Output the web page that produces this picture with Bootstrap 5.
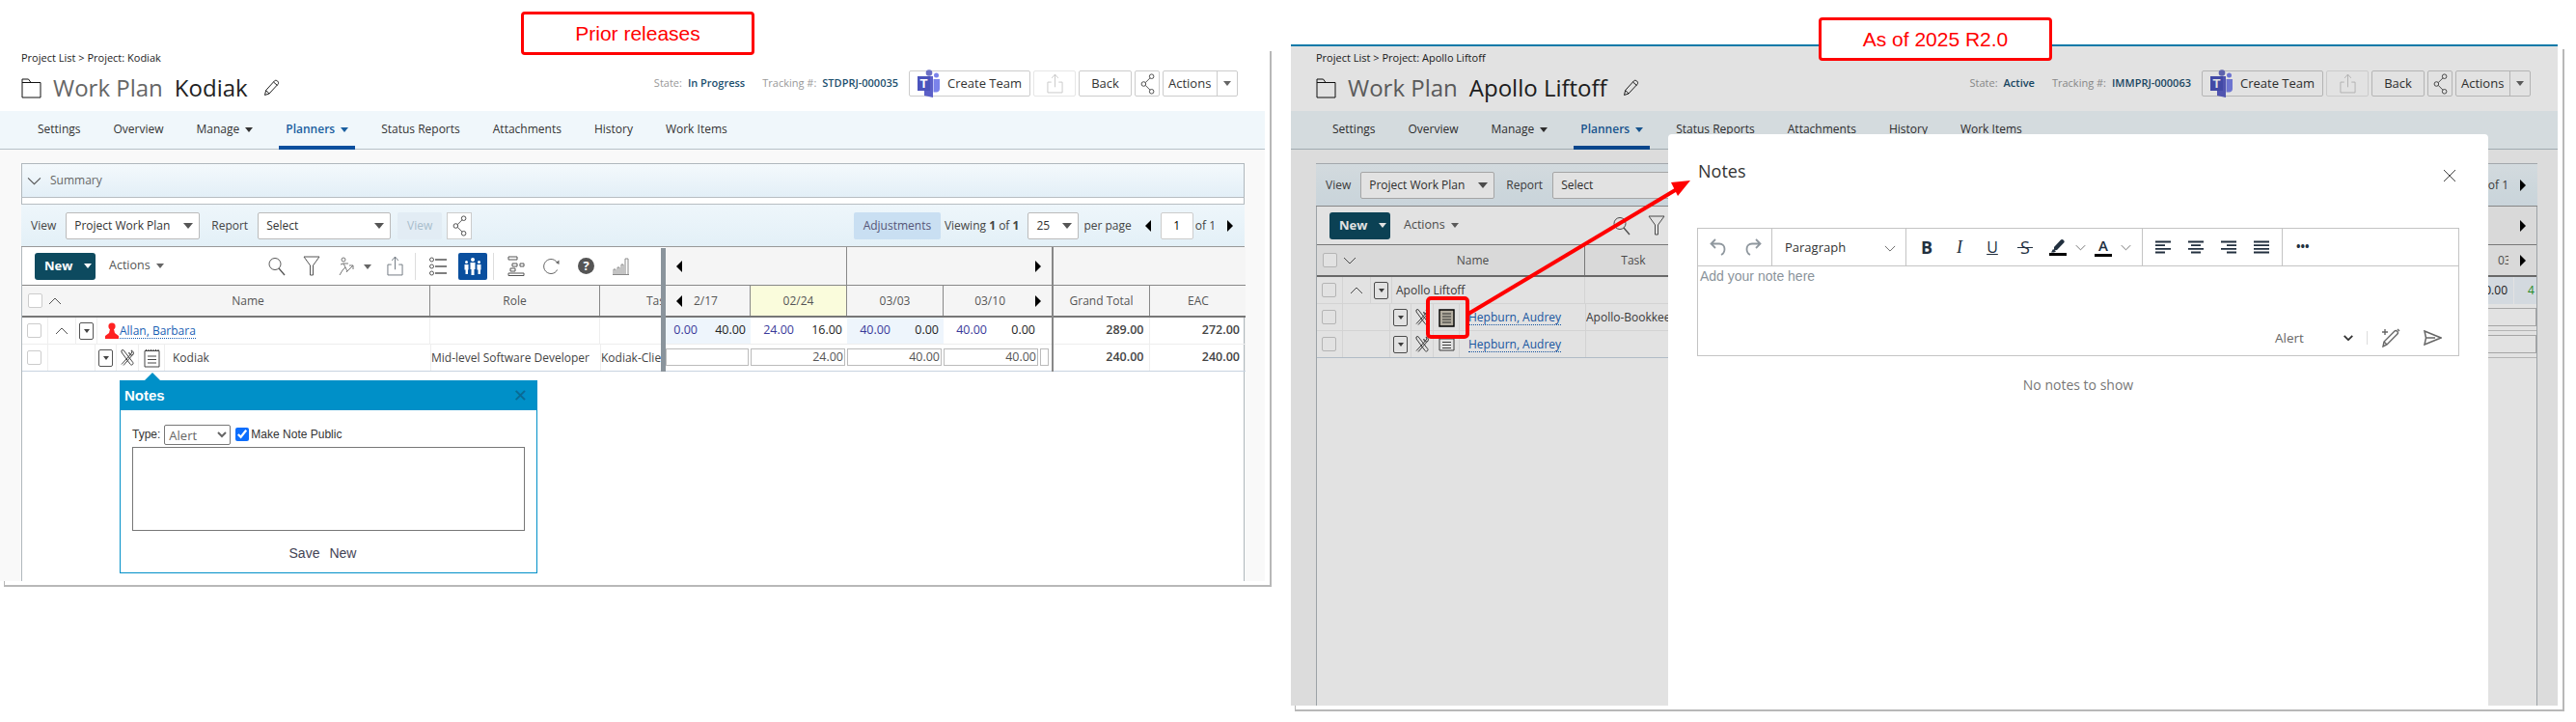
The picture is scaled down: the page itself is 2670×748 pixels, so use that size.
<!DOCTYPE html>
<html lang="en">
<head>
<meta charset="UTF-8">
<title>Notes: prior releases and 2025 R2.0</title>
<link rel="stylesheet" href="https://cdn.jsdelivr.net/npm/bootstrap@5.3.0/dist/css/bootstrap.min.css">
<style>
body { position: relative; width: 2670px; height: 748px; margin: 0; background: #fff; font-family: "Open Sans", sans-serif; font-size: 12px; color: #444; overflow: hidden; }
svg { display: block; flex: none; }
.ico { fill: none; stroke: #555; stroke-width: 1; }

/* the two screenshots */
.pages { display: flex; align-items: flex-start; gap: 20px; }
.shot { position: relative; flex: none; }
.shot::after { content: ""; position: absolute; left: 4px; top: 5px; right: 0; bottom: 0; border: solid #b8b8b8; border-width: 0 2px 2px 1px; z-index: -1; }
.shot-a { --pad: 22px; width: 1318px; height: 560px; margin-top: 48px; padding: 0 7px 6px 0; }
.shot-b { --pad: 26px; width: 1320px; height: 691px; margin-top: 46px; padding: 0 7px 6px 0; }
.shot-in { position: relative; height: 100%; display: flex; flex-direction: column; background: #fff; }
.shot-b .shot-in { border-top: 2px solid #0a7aa8; }
.crumb { height: 24px; line-height: 24px; padding-left: var(--pad); font-size: 11px; color: #222; }
.head-row { display: flex; height: 43px; padding: 0 28px 0 var(--pad); }
.page-title { display: flex; align-items: center; height: 38px; font-size: 24px; line-height: 38px; color: #222; }
.page-title .muted-title { color: #666; margin: 0 12px; }
.head-right { display: flex; align-items: center; height: 27px; margin: 1px 0 0 auto; font-size: 11px; }
.stat-lbl { color: #999; margin-right: 6px; }
.stat-val { color: #1c4f6e; font-weight: 600; margin-right: 18px; }
.stat-val.last { margin-right: 11px; }
.hbtn { display: flex; align-items: center; height: 27px; padding: 0; border: 1px solid #ccc; border-radius: 2px; background: #fff; font-size: 13px; line-height: 1; color: #333; margin-right: 3px; justify-content: center; }
.hbtn-team { width: 126px; gap: 4px; }
.hbtn-up { width: 44px; border-color: #e6e6e6; color: #c8c8c8; }
.hbtn-back { width: 55px; }
.hbtn-share { width: 26px; }
.hbtn-act { width: 78px; margin-right: 0; justify-content: flex-start; padding-left: 5px; }
.act-split { display: flex; align-items: center; justify-content: center; width: 21px; height: 100%; margin-left: auto; border-left: 1px solid #ccc; }

/* tabs */
.tabbar { height: 40px; flex: none; padding-left: var(--pad); background: #f0f7fb; border-bottom: 1px solid #b5c0c8; }
.tabbar .nav-link { position: relative; height: 39px; padding: 0 17px; line-height: 37px; font-size: 12px; color: #333; }
.tabbar .nav-link.active { color: #1a5fa0; font-weight: 600; }
.tabbar .nav-link.active::after { content: ""; position: absolute; left: 10px; right: 10px; bottom: -1px; height: 4px; background: #0a4f9e; }
.tri-d { display: inline-block; width: 0; height: 0; border: solid transparent; border-width: 5px 4px 0; border-top-color: #333; margin-left: 6px; vertical-align: 1px; }
.active .tri-d { border-top-color: #1a5fa0; }
.tri-g { border-top-color: #666; }
.tri-l, .tri-r { display: block; flex: none; width: 0; height: 0; border: solid transparent; border-width: 6px 0; }
.tri-l { border-right: 6px solid #000; }
.tri-r { border-left: 6px solid #000; }

/* page body */
.work { flex: 1; display: flex; flex-direction: column; min-height: 0; padding: 14px 21px 0 var(--pad); background: #f9f9f9; }
.sheet { flex: 1; background: #fff; border: solid #b0b8bd; border-width: 0 1px; }
.sum-bar { display: flex; align-items: center; gap: 9px; height: 36px; padding-left: 5px; margin: 0 -1px; border: 1px solid #b0b8bd; border-bottom-color: #b8bec2; background: linear-gradient(#f4f9fc, #e3eff7); color: #666; }
.sum-gap { height: 6px; }
.opt-bar { display: flex; align-items: center; height: 45px; padding: 0 12px 0 10px; border-top: 1px solid #b8bec2; border-bottom: 1px solid #999; margin: 0 -1px; background: linear-gradient(#eef6fb, #e3f0f7); color: #444; }
.pick.btn { display: flex; align-items: center; justify-content: space-between; height: 28px; padding: 0 6px 0 8px; border: 1px solid #bbb; border-radius: 2px; background: #fff; font-size: 12px; color: #333; }
.pick.btn::after { border-top-color: #555; border-width: 6px 5px 0; margin: 0; }
.pick-view { width: 139px; margin: 0 12px 0 10px; }
.pick-rep { width: 138px; margin: 0 7px 0 10px; }
.pick-size { width: 53px; margin: 0 5px 0 9px; }
.off-btn { display: flex; align-items: center; justify-content: center; width: 46px; height: 28px; background: #e2ecf4; color: #a8bdcc; border-radius: 2px; margin-right: 5px; }
.share-box { display: flex; align-items: center; justify-content: center; width: 26px; height: 28px; background: #fff; border: 1px solid #ccc; }
.adj-btn { display: flex; align-items: center; justify-content: center; width: 90px; height: 28px; margin: 0 4px 0 auto; background: #c9dff2; color: #557; border-radius: 2px; }
.page-box { width: 34px; height: 28px; margin: 0 2px 0 10px; padding: 0; text-align: center; border: 1px solid #ccc; border-radius: 2px; font-size: 12px; }
.pg-l { margin: 0 0 0 14px; }
.pg-r { margin-left: 12px; }

/* grid */
.grid-wrap { display: flex; }
.grid-left { flex: none; width: 662px; overflow: hidden; }
.shot-b .grid-left { width: 370px; }
.split { flex: none; width: 5px; background: #8a949c; margin-top: 1px; height: 128px; }
.grid-mid { flex: none; width: 400px; }
.grid-tot { flex: none; width: 201px; border-left: 2px solid #888; }
.tool-row { display: flex; align-items: center; height: 40px; padding: 0 0 0 13px; border-bottom: 1px solid #888; }
.new-btn { display: flex; align-items: center; width: 63px; height: 28px; background: #0d4a5f; border-radius: 3px; color: #fff; font-weight: 700; font-size: 13px; padding-left: 10px; }
.new-btn .tri-d { border-top-color: #fff; margin-left: 12px; }
.act-link { margin-left: 14px; color: #555; font-size: 12.5px; }
.tslot { display: flex; align-items: center; justify-content: center; width: 36px; height: 28px; }
.tslot.on { background: #0a4f9e; border-radius: 2px; width: 30px; margin: 0 3px; }
.tcar { width: 14px; }
.tsep { width: 1px; height: 28px; background: #ddd; margin: 0 5px 0 3px; }
.grid-head { display: flex; align-items: center; height: 33px; background: #f5f5f5; border-bottom: 2px solid #777; font-weight: 500; color: #555; }
.grid-row { display: flex; align-items: center; height: 28px; border-bottom: 1px solid #eee; }
.grid-row.end { border-bottom-color: #c8d4e0; }
.gc { display: flex; align-items: center; flex: none; height: 100%; border-right: 1px solid #eee; }
.gc-plain { border-right: 0; }
.hc { justify-content: center; border-right: 1px solid #888; }
.c-chk { width: 27px; justify-content: center; padding-right: 1px; }
.c-chev { width: 29px; justify-content: center; }
.c-hchev { width: 19px; border: 0; }
.c-exp { width: 22px; justify-content: center; }
.c-blank { width: 49px; }
.c-tool { width: 23px; justify-content: center; }
.c-note { width: 27px; justify-content: center; }
.name-a .c-name { width: 377px; }
.name-a .c-rname { width: 345px; }
.name-a .c-sname { width: 276px; }
.name-b .c-name { width: 232px; }
.name-b .c-rname { width: 200px; }
.name-b .c-sname { width: 131px; }
.c-role { width: 176px; padding-left: 0; white-space: nowrap; overflow: hidden; }
.c-task { width: 100px; white-space: nowrap; overflow: hidden; }
.box-chk { display: block; width: 15px; height: 15px; border: 1px solid #ccc; border-radius: 2px; background: #fff; }
.exp-btn { display: flex; align-items: center; justify-content: center; width: 15px; height: 18px; border: 1px solid #555; border-radius: 2px; background: #fff; }
.exp-btn .tri-d { border-width: 4px 3px 0; margin: 0; border-top-color: #444; }
.who { color: #1a5fb4; border-bottom: 1px dotted #1a5fb4; line-height: 15px; text-decoration: none; margin-left: 1px; }

/* weeks */
.wk-nav { display: flex; align-items: center; height: 40px; background: #f5f5f5; border-bottom: 1px solid #888; }
.wk-half { display: flex; align-items: center; height: 100%; padding: 0 11px; }
.wk-h1 { width: 188px; border-right: 1px solid #888; }
.wk-h2 { flex: 1; justify-content: flex-end; padding-right: 11px; }
.wk-row { display: flex; height: 33px; background: #f5f5f5; border-bottom: 2px solid #777; color: #555; }
.wk { display: flex; align-items: center; justify-content: center; flex: none; width: 100px; border-right: 1px solid #888; }
.wk-1 { width: 88px; justify-content: flex-start; padding-left: 11px; gap: 12px; }
.wk-4 { width: 112px; border-right: 0; justify-content: flex-end; padding-right: 11px; gap: 31px; }
.wk-now { background: #fafcdc; }
.nums { display: flex; height: 28px; border-bottom: 1px solid #eee; }
.nums.end { border-bottom-color: #c8d4e0; }
.pair { display: flex; flex: none; width: 100px; }
.pair-1 { width: 88px; }
.pair-4 { width: 112px; }
.tint { background: #eef5fc; }
.pv { display: flex; align-items: center; justify-content: flex-end; flex: none; width: 50px; padding-right: 5px; color: #222; font-size: 12.5px; }
.plan { color: #3a3a9a; }
.pv-n { width: 37px; padding-right: 4px; }
.pv-w { width: 51px; padding-right: 5px; }
.hrs { flex: none; width: 100px; height: 18px; margin: 4px 2px 0 0; padding: 0 1px 0 0; border: 1px solid #bbb; background: #fff; text-align: right; font-size: 12.5px; color: #555; }
.hrs-1 { width: 86px; }
.hrs-4 { width: 98px; }
.hrs-5 { width: 9px; margin-right: 0; }
.tot-head { height: 40px; background: #f5f5f5; border-bottom: 1px solid #888; }
.tot-row { display: flex; height: 33px; background: #f5f5f5; border-bottom: 2px solid #777; font-weight: 500; color: #555; }
.tot-row div { display: flex; align-items: center; justify-content: center; flex: none; width: 100px; border-right: 1px solid #888; }
.tot-row div:last-child { border-right: 0; }
.tot-vals { display: flex; height: 28px; border-bottom: 1px solid #eee; font-weight: 600; color: #444; font-size: 12.5px; }
.tot-vals.end { border-bottom-color: #c8d4e0; }
.tot-vals div { display: flex; align-items: center; justify-content: flex-end; width: 100px; padding-right: 5px; border-right: 1px solid #eee; }

/* old notes popup */
.old-note { position: absolute; left: 124px; top: 346px; width: 433px; height: 200px; background: #fff; border: 1px solid #0090c8; font-family: "Liberation Sans", sans-serif; font-size: 12px; color: #333; }
.old-note::before { content: ""; position: absolute; left: 24px; top: -9px; border: solid transparent; border-width: 0 9px 9px; border-bottom-color: #0090c8; }
.old-head { display: flex; align-items: center; justify-content: space-between; height: 30px; padding: 0 9px 0 4px; background: #0090c8; color: #fff; font-weight: 700; font-size: 15px; }
.old-x { color: #0a6a94; font-size: 18px; font-weight: 400; line-height: 1; }
.old-body { padding: 13px 12px 0; }
.old-type { display: flex; align-items: center; height: 24px; gap: 4px; }
.old-type select { width: 69px; height: 21px; font: 13px "Open Sans", sans-serif; color: #666; background: #fff; border: 1px solid #777; border-radius: 2px; }
.old-type input { width: 14px; height: 14px; margin: 0 -2px 0 1px; accent-color: #0d6efd; }
.old-body textarea { display: block; width: 407px; height: 87px; margin-top: 1px; border: 1px solid #777; resize: none; }
.old-links { display: flex; justify-content: center; gap: 10px; margin: 13px 0 0 -12px; font-size: 14px; color: #445; }

/* backdrop and new notes modal */
.dim { position: absolute; inset: 0; background: rgba(0, 0, 0, .114); }
.note-modal { position: absolute; left: 391px; top: 91px; bottom: 0; width: 850px; background: #fff; border-radius: 4px 4px 0 0; }
.note-title { position: absolute; left: 31px; top: 25px; font-size: 18px; color: #333; }
.note-x { position: absolute; left: 803px; top: 36px; }
.edit-box { position: absolute; left: 30px; top: 97px; width: 790px; height: 133px; border: 1px solid #c4c4c4; }
.edit-tools { display: flex; align-items: center; height: 39px; border-bottom: 1px solid #c4c4c4; color: #22303f; }
.eg { display: flex; align-items: center; height: 100%; border-right: 1px solid #c4c4c4; }
.eg-hist { width: 77px; padding-left: 12px; gap: 20px; }
.eg-para { width: 139px; padding: 2px 10px 0 13px; justify-content: space-between; font-size: 13px; color: #333; }
.eg-font { width: 245px; }
.eg-align { width: 145px; padding-left: 13px; gap: 18px; }
.eg-more { border: 0; padding-left: 14px; }
.etb { display: flex; align-items: center; justify-content: center; flex: none; font-size: 18px; line-height: 1; width: 34px; }
.etb-b { font-weight: 700; }
.etb-i { font-family: "Liberation Serif", serif; font-style: italic; }
.etb-u { text-decoration: underline; font-size: 16px; }
.etb-s { position: relative; font-size: 18px; }
.etb-s::after { content: ""; position: absolute; left: 9px; right: 9px; top: 50%; height: 1px; background: #22303f; }
.etb-hl { width: 30px; margin-left: 2px; }
.etb-a { width: 30px; font-size: 15px; font-weight: 600; flex-direction: column; }
.etb-a i { display: block; width: 18px; height: 3px; background: #000; margin-top: 1px; }
.etb-c { width: 17px; }
.edit-ph { padding: 2px; font-family: "Liberation Sans", sans-serif; font-size: 14px; line-height: 17px; color: #8a939b; }
.edit-foot { position: absolute; right: 17px; bottom: 6px; display: flex; align-items: center; height: 24px; color: #666; font-size: 13.5px; }
.foot-type { width: 71px; }
.foot-bar { width: 1px; height: 14px; background: #ddd; margin: 0 14px; }
.no-notes { position: absolute; left: 0; right: 0; top: 249px; text-align: center; font-size: 14px; color: #777; }

/* what shows to the right of the modal */
.side-part { flex: none; width: 62px; margin-left: auto; overflow: hidden; }
.side-top { display: flex; align-items: center; justify-content: flex-end; height: 40px; padding-right: 11px; background: #f5f5f5; border-bottom: 1px solid #888; }
.side-head { display: flex; align-items: center; justify-content: flex-end; gap: 12px; height: 33px; padding-right: 11px; background: #f5f5f5; border-bottom: 2px solid #777; color: #555; }
.side-clip { width: 11px; overflow: hidden; }
.side-nums { display: flex; height: 28px; background: #eef5fc; color: #222; font-size: 12px; }
.side-nums span { display: flex; align-items: center; justify-content: flex-end; width: 39px; padding-right: 6px; border-right: 1px solid #fff; }
.side-nums b { display: flex; align-items: center; padding-left: 14px; color: #2c9c2c; font-weight: 400; }
.side-inp { height: 28px; border-bottom: 1px solid #ccc; position: relative; }
.side-inp::after { content: ""; position: absolute; left: 0; right: 0; top: 4px; height: 19px; border: 1px solid #bbb; border-left: 0; }

/* annotations */
.tag { position: absolute; display: flex; align-items: center; justify-content: center; height: 45px; background: #fff; border: 3px solid #f00; border-radius: 4px; color: #f00; font-family: "Liberation Sans", sans-serif; font-size: 21px; z-index: 5; }
.tag-a { left: 540px; top: 12px; width: 242px; }
.tag-b { left: 1885px; top: 18px; width: 242px; }
.pointer { position: absolute; left: 1470px; top: 180px; z-index: 4; }
</style>
</head>
<body>

<svg class="d-none" xmlns="http://www.w3.org/2000/svg">
  <symbol id="i-folder" viewBox="0 0 21 21"><path d="M1 20V1h6.500L10 4.500h10V20zM1 4.500h9" fill="none" stroke="#111"/></symbol>
  <symbol id="i-pencil" viewBox="0 0 17 18"><path d="M1.500 16.500l1.200-5L11.500 1.800c1-.9 2.200-.6 3.200.3s1.300 2.200.3 3.200L6 15zM2.700 11.500L6 15M10.500 3l4 3.500" fill="none" stroke="#222"/></symbol>
  <symbol id="i-share" viewBox="0 0 16 24"><g fill="none" stroke="#444"><circle cx="3.500" cy="12" r="2.500"/><circle cx="12.500" cy="3.500" r="2.500"/><circle cx="12.500" cy="20.500" r="2.500"/><path d="M5.500 10.500L10.700 5.300M5.500 13.500l5.200 5.200"/></g></symbol>
  <symbol id="i-up" viewBox="0 0 18 22"><path d="M5 9.500H1V21h16V9.500h-4M9 15V1M5.500 5L9 1l3.500 4" fill="none" stroke="currentColor"/></symbol>
  <symbol id="i-search" viewBox="0 0 18 20"><circle cx="7" cy="7.500" r="6" fill="none" stroke="#555"/><path d="M11 12l6 7" stroke="#555" stroke-width="1.300"/></symbol>
  <symbol id="i-filter" viewBox="0 0 18 21"><path d="M1 1h16l-6.500 9v10h-3V10z" fill="none" stroke="#555"/></symbol>
  <symbol id="i-run" viewBox="0 0 18 20"><g fill="none" stroke="#777"><circle cx="6" cy="3" r="2"/><path d="M3 8l3-1 2 4-3 3-3 5M8 11l2 4M6 7h5M9 16l7-7M12 9h4v4"/></g></symbol>
  <symbol id="i-list" viewBox="0 0 18 20"><g fill="none" stroke="#555"><circle cx="2.500" cy="3" r="2"/><circle cx="2.500" cy="10" r="2"/><circle cx="2.500" cy="17" r="2"/><path d="M6 3h12M6 10h12M6 17h12" stroke-width="1.500"/></g></symbol>
  <symbol id="i-crew" viewBox="0 0 18 20"><g fill="#fff"><circle cx="9" cy="3" r="2"/><path d="M6.500 6h5v7h-1v6h-3v-6h-1z"/><circle cx="2.500" cy="5.500" r="1.500"/><path d="M.5 8H4.500v5.500H4V18H1.500v-4.500H.5z"/><circle cx="15.500" cy="5.500" r="1.500"/><path d="M13.500 8h4v5.500H17V18h-2.500v-4.500h-1z"/></g></symbol>
  <symbol id="i-gantt" viewBox="0 0 18 21"><g fill="none" stroke="#555"><path d="M1 1h9v3H1zM1 18h16v2.500H1zM5 8h5v3H5zM13 8h4v3h-4zM3 13h5v3H3z"/></g></symbol>
  <symbol id="i-redo" viewBox="0 0 18 20"><path d="M15.500 6A7.500 7.500 0 1 0 9 17.500c3 0 5.500-1.500 6.500-4" fill="none" stroke="#666"/><path d="M14 6l3.500 2V3.500z" fill="#666"/></symbol>
  <symbol id="i-bars" viewBox="0 0 17 18"><path d="M1 17V12h2v5M5 17V10h2v7M9 17V7h2v10M13 17V1h3v16M0 17.500h17" fill="none" stroke="#888"/></symbol>
  <symbol id="i-tools" viewBox="0 0 14 17"><g fill="none" stroke="#444"><path d="M1 15.500l10-11M3 16.500l9.500-11"/><path d="M13 5.500c1-2 0-4-2-4.500l1 2-1.500 1.500-2-1c.3 2 2.500 3 4.500 2"/><path d="M1 1l1.800-.5 10 13c.5 1 .2 2-1 2.500-1 .3-1.500-.3-2-1L1 3z"/></g></symbol>
  <symbol id="i-pad" viewBox="0 0 17 20"><g fill="none" stroke="#444"><path d="M1 2.500h15V19H1z"/><path d="M2.500 1v2M5 1v2M7.500 1v2M10 1v2M12.500 1v2M15 1v2M4 8h9M4 11.500h9M4 15h9"/></g></symbol>
  <symbol id="i-pad-on" viewBox="0 0 17 20"><path d="M1 2h15v17H1z" fill="#c9c2b4" stroke="#000" stroke-width="1.400"/><path d="M4 6h9M4 9h9M4 12h9M4 15h9" stroke="#333"/></symbol>
  <symbol id="i-pad-row" viewBox="0 0 17 14"><path d="M1 1h15v12H1z" fill="none" stroke="#444"/><path d="M4 4.500h9M4 7.500h9M4 10.500h9" stroke="#444"/></symbol>
  <symbol id="i-person" viewBox="0 0 14 18"><circle cx="7" cy="4" r="3.600" fill="#f22"/><path d="M5 7h4l1 4 4 3v3H0v-3l4-3z" fill="#f22"/></symbol>
  <symbol id="i-cup" viewBox="0 0 14 8"><path d="M1 7l6-6 6 6" fill="none" stroke="#555"/></symbol>
  <symbol id="i-cdown" viewBox="0 0 14 8"><path d="M1 1l6 6 6-6" fill="none" stroke="#555"/></symbol>
  <symbol id="i-undo" viewBox="0 0 17 18"><path d="M6 1L1.500 5.500 6 10M1.500 5.500H10c3.500 0 5.500 2.500 5.500 5.500S14 16 12 17" fill="none" stroke="#8f979e" stroke-width="1.800"/></symbol>
  <symbol id="i-rdo" viewBox="0 0 17 18"><path d="M11 1l4.500 4.500L11 10M15.500 5.500H7C3.500 5.500 1.500 8 1.500 11S3 16 5 17" fill="none" stroke="#8f979e" stroke-width="1.800"/></symbol>
  <symbol id="i-hl" viewBox="0 0 18 18"><path d="M5 9L12 1.500c.8-.8 1.800-.7 2.800.2s1.200 2 .4 2.800L8 12l-3 .5z M4 11l3 2.500L5 14.500H2z" fill="#22303f"/><path d="M0 16.500h18" stroke="#000" stroke-width="3"/></symbol>
  <symbol id="i-al" viewBox="0 0 16 14"><path d="M0 1.500h16M0 5.200h10M0 8.800h16M0 12.500h10" stroke="#22303f" stroke-width="1.800"/></symbol>
  <symbol id="i-ac" viewBox="0 0 16 14"><path d="M0 1.500h16M3 5.200h10M0 8.800h16M3 12.500h10" stroke="#22303f" stroke-width="1.800"/></symbol>
  <symbol id="i-ar" viewBox="0 0 16 14"><path d="M0 1.500h16M6 5.200h10M0 8.800h16M6 12.500h10" stroke="#22303f" stroke-width="1.800"/></symbol>
  <symbol id="i-aj" viewBox="0 0 16 14"><path d="M0 1.500h16M0 5.200h16M0 8.800h16M0 12.500h16" stroke="#22303f" stroke-width="1.800"/></symbol>
  <symbol id="i-wand" viewBox="0 0 20 20"><path d="M2 19l1-5L14 3c.8-.8 1.800-.6 2.700.3s1 1.900.2 2.700L6 17zM3 14l3 3" fill="none" stroke="#666" stroke-width="1.400"/><path d="M4 1v6M1 4h6M17 1l2 2" stroke="#666" stroke-width="1.400"/></symbol>
  <symbol id="i-send" viewBox="0 0 19 16"><path d="M1 1l17 7-17 7 1.500-7zM2.500 8H12" fill="none" stroke="#666" stroke-width="1.500"/></symbol>
  <symbol id="i-x" viewBox="0 0 14 14"><path d="M1 1l12 12M13 1L1 13" stroke="#444"/></symbol>
  <symbol id="i-teams" viewBox="0 0 23 30"><circle cx="12" cy="3.500" r="3.300" fill="#6b70c4"/><circle cx="19.500" cy="6" r="2.500" fill="#7b83eb"/><path d="M16.500 10H23v10c0 2-1.500 3.500-3.500 3.500h-3z" fill="#7b83eb"/><path d="M7 7h9v22l-9-2z" fill="#5b5fc7"/><path d="M0 7h13v15H0z" fill="#4b53bc"/><text x="6.500" y="19" text-anchor="middle" font-family="Liberation Sans, sans-serif" font-size="13" font-weight="700" fill="#fff">T</text></symbol>
</svg>

<div class="tag tag-a">Prior releases</div>
<div class="tag tag-b">As of 2025 R2.0</div>

<div class="pages">

  <!-- prior releases -->
  <section class="shot shot-a name-a">
    <div class="shot-in">
      <div class="crumb">Project List &gt; Project: Kodiak</div>
      <div class="head-row">
        <div class="page-title">
          <svg width="21" height="21"><use href="#i-folder"/></svg>
          <span class="muted-title">Work Plan</span><span>Kodiak</span>
          <svg class="ms-3" width="17" height="18"><use href="#i-pencil"/></svg>
        </div>
        <div class="head-right">
          <span class="stat-lbl">State:</span><span class="stat-val">In Progress</span>
          <span class="stat-lbl">Tracking #:</span><span class="stat-val last">STDPRJ-000035</span>
          <button class="hbtn hbtn-team"><svg width="23" height="30" class="me-1"><use href="#i-teams"/></svg>Create Team</button>
          <button class="hbtn hbtn-up"><svg width="17" height="21"><use href="#i-up"/></svg></button>
          <button class="hbtn hbtn-back">Back</button>
          <button class="hbtn hbtn-share"><svg width="15" height="22"><use href="#i-share"/></svg></button>
          <button class="hbtn hbtn-act">Actions<span class="act-split"><i class="tri-d tri-g m-0"></i></span></button>
        </div>
      </div>
      <ul class="nav tabbar">
        <li class="nav-item"><a class="nav-link" href="#">Settings</a></li>
        <li class="nav-item"><a class="nav-link" href="#">Overview</a></li>
        <li class="nav-item"><a class="nav-link" href="#">Manage<i class="tri-d"></i></a></li>
        <li class="nav-item"><a class="nav-link active" href="#">Planners<i class="tri-d"></i></a></li>
        <li class="nav-item"><a class="nav-link" href="#">Status Reports</a></li>
        <li class="nav-item"><a class="nav-link" href="#">Attachments</a></li>
        <li class="nav-item"><a class="nav-link" href="#">History</a></li>
        <li class="nav-item"><a class="nav-link" href="#">Work Items</a></li>
      </ul>
      <div class="work">
        <div class="sheet">
          <div class="sum-bar"><svg width="15" height="9"><use href="#i-cdown"/></svg>Summary</div>
          <div class="sum-gap"></div>
          <div class="opt-bar">
            <span>View</span>
            <button class="btn pick pick-view dropdown-toggle">Project Work Plan</button>
            <span>Report</span>
            <button class="btn pick pick-rep dropdown-toggle">Select</button>
            <span class="off-btn">View</span>
            <span class="share-box"><svg width="15" height="22"><use href="#i-share"/></svg></span>
            <span class="adj-btn">Adjustments</span>
            <span>Viewing <b>1</b> of <b>1</b></span>
            <button class="btn pick pick-size dropdown-toggle">25</button>
            <span>per page</span>
            <i class="tri-l pg-l"></i>
            <input class="page-box" value="1">
            <span>of 1</span>
            <i class="tri-r pg-r"></i>
          </div>
          <div class="grid-wrap">
            <div class="grid-left">
              <div class="tool-row">
                <span class="new-btn">New<i class="tri-d"></i></span>
                <span class="act-link">Actions<i class="tri-d tri-g"></i></span>
                <span class="tslot ms-auto"><svg width="18" height="20"><use href="#i-search"/></svg></span>
                <span class="tslot"><svg width="18" height="21"><use href="#i-filter"/></svg></span>
                <span class="tslot"><svg width="18" height="20"><use href="#i-run"/></svg></span>
                <span class="tcar"><i class="tri-d tri-g m-0"></i></span>
                <span class="tslot"><svg width="17" height="21" class="text-secondary"><use href="#i-up"/></svg></span>
                <span class="tsep"></span>
                <span class="tslot"><svg width="18" height="20"><use href="#i-list"/></svg></span>
                <span class="tslot on"><svg width="18" height="20"><use href="#i-crew"/></svg></span>
                <span class="tsep"></span>
                <span class="tslot"><svg width="18" height="21"><use href="#i-gantt"/></svg></span>
                <span class="tslot"><svg width="18" height="20"><use href="#i-redo"/></svg></span>
                <span class="tslot"><svg width="17" height="17" viewBox="0 0 17 17"><circle cx="8.500" cy="8.500" r="8.500" fill="#555"/><text x="8.500" y="13" text-anchor="middle" font-size="13" font-weight="700" fill="#fff" font-family="Open Sans, sans-serif">?</text></svg></span>
                <span class="tslot me-4"><svg width="17" height="18"><use href="#i-bars"/></svg></span>
              </div>
              <div class="grid-head">
                <div class="gc c-chk gc-plain"><i class="box-chk"></i></div>
                <div class="gc c-hchev"><svg width="14" height="8"><use href="#i-cup"/></svg></div>
                <div class="gc hc c-name">Name</div>
                <div class="gc hc c-role">Role</div>
                <div class="gc c-task gc-plain ps-5">Task</div>
              </div>
              <div class="grid-row">
                <div class="gc c-chk"><i class="box-chk"></i></div>
                <div class="gc c-chev"><svg width="14" height="8"><use href="#i-cup"/></svg></div>
                <div class="gc c-exp"><span class="exp-btn"><i class="tri-d"></i></span></div>
                <div class="gc c-rname ps-1"><svg width="14" height="18" class="ms-1"><use href="#i-person"/></svg><a class="who" href="#">Allan, Barbara</a></div>
                <div class="gc c-role"></div>
                <div class="gc c-task gc-plain"></div>
              </div>
              <div class="grid-row end">
                <div class="gc c-chk"><i class="box-chk"></i></div>
                <div class="gc c-blank"></div>
                <div class="gc c-exp"><span class="exp-btn"><i class="tri-d"></i></span></div>
                <div class="gc c-tool"><svg width="14" height="17"><use href="#i-tools"/></svg></div>
                <div class="gc c-note"><svg width="17" height="20"><use href="#i-pad"/></svg></div>
                <div class="gc c-sname ps-2">Kodiak</div>
                <div class="gc c-role">Mid-level Software Developer</div>
                <div class="gc c-task gc-plain">Kodiak-Client</div>
              </div>
            </div>
            <div class="split"></div>
            <div class="grid-mid">
              <div class="wk-nav">
                <div class="wk-half wk-h1"><i class="tri-l"></i></div>
                <div class="wk-half wk-h2"><i class="tri-r"></i></div>
              </div>
              <div class="wk-row">
                <div class="wk wk-1"><i class="tri-l"></i>2/17</div>
                <div class="wk wk-now">02/24</div>
                <div class="wk">03/03</div>
                <div class="wk wk-4">03/10<i class="tri-r"></i></div>
              </div>
              <div class="nums">
                <div class="pair pair-1 tint"><span class="pv pv-n plan">0.00</span><span class="pv pv-w">40.00</span></div>
                <div class="pair"><span class="pv plan">24.00</span><span class="pv">16.00</span></div>
                <div class="pair tint"><span class="pv plan">40.00</span><span class="pv">0.00</span></div>
                <div class="pair pair-4"><span class="pv plan">40.00</span><span class="pv">0.00</span></div>
              </div>
              <div class="nums end">
                <input class="hrs hrs-1" value="">
                <input class="hrs hrs-4" value="24.00">
                <input class="hrs hrs-4" value="40.00">
                <input class="hrs hrs-4" value="40.00">
                <input class="hrs hrs-5" value="">
              </div>
            </div>
            <div class="grid-tot">
              <div class="tot-head"></div>
              <div class="tot-row"><div>Grand Total</div><div>EAC</div></div>
              <div class="tot-vals"><div>289.00</div><div>272.00</div></div>
              <div class="tot-vals end"><div>240.00</div><div>240.00</div></div>
            </div>
          </div>
        </div>
      </div>
      <div class="old-note">
        <div class="old-head"><span>Notes</span><span class="old-x">&#10005;</span></div>
        <div class="old-body">
          <div class="old-type">
            <label>Type:</label>
            <select><option>Alert</option></select>
            <input type="checkbox" checked>
            <label>Make Note Public</label>
          </div>
          <textarea></textarea>
          <div class="old-links"><span>Save</span><span>New</span></div>
        </div>
      </div>
    </div>
  </section>

  <!-- as of 2025 R2.0 -->
  <section class="shot shot-b name-b">
    <div class="shot-in">
      <div class="crumb">Project List &gt; Project: Apollo Liftoff</div>
      <div class="head-row">
        <div class="page-title">
          <svg width="21" height="21"><use href="#i-folder"/></svg>
          <span class="muted-title">Work Plan</span><span>Apollo Liftoff</span>
          <svg class="ms-3" width="17" height="18"><use href="#i-pencil"/></svg>
        </div>
        <div class="head-right">
          <span class="stat-lbl">State:</span><span class="stat-val">Active</span>
          <span class="stat-lbl">Tracking #:</span><span class="stat-val last">IMMPRJ-000063</span>
          <button class="hbtn hbtn-team"><svg width="23" height="30" class="me-1"><use href="#i-teams"/></svg>Create Team</button>
          <button class="hbtn hbtn-up"><svg width="17" height="21"><use href="#i-up"/></svg></button>
          <button class="hbtn hbtn-back">Back</button>
          <button class="hbtn hbtn-share"><svg width="15" height="22"><use href="#i-share"/></svg></button>
          <button class="hbtn hbtn-act">Actions<span class="act-split"><i class="tri-d tri-g m-0"></i></span></button>
        </div>
      </div>
      <ul class="nav tabbar">
        <li class="nav-item"><a class="nav-link" href="#">Settings</a></li>
        <li class="nav-item"><a class="nav-link" href="#">Overview</a></li>
        <li class="nav-item"><a class="nav-link" href="#">Manage<i class="tri-d"></i></a></li>
        <li class="nav-item"><a class="nav-link active" href="#">Planners<i class="tri-d"></i></a></li>
        <li class="nav-item"><a class="nav-link" href="#">Status Reports</a></li>
        <li class="nav-item"><a class="nav-link" href="#">Attachments</a></li>
        <li class="nav-item"><a class="nav-link" href="#">History</a></li>
        <li class="nav-item"><a class="nav-link" href="#">Work Items</a></li>
      </ul>
      <div class="work">
        <div class="sheet">
          <div class="opt-bar">
            <span>View</span>
            <button class="btn pick pick-view dropdown-toggle">Project Work Plan</button>
            <span>Report</span>
            <button class="btn pick pick-rep dropdown-toggle">Select</button>
            <span class="ms-auto">of 1</span>
            <i class="tri-r pg-r"></i>
          </div>
          <div class="grid-wrap">
            <div class="grid-left">
              <div class="tool-row">
                <span class="new-btn">New<i class="tri-d"></i></span>
                <span class="act-link">Actions<i class="tri-d tri-g"></i></span>
                <span class="tslot ms-auto"><svg width="18" height="20"><use href="#i-search"/></svg></span>
                <span class="tslot"><svg width="18" height="21"><use href="#i-filter"/></svg></span>
              </div>
              <div class="grid-head">
                <div class="gc c-chk gc-plain"><i class="box-chk"></i></div>
                <div class="gc c-hchev"><svg width="14" height="8"><use href="#i-cdown"/></svg></div>
                <div class="gc hc c-name">Name</div>
                <div class="gc c-task gc-plain justify-content-center">Task</div>
              </div>
              <div class="grid-row">
                <div class="gc c-chk"><i class="box-chk"></i></div>
                <div class="gc c-chev"><svg width="14" height="8"><use href="#i-cup"/></svg></div>
                <div class="gc c-exp"><span class="exp-btn"><i class="tri-d"></i></span></div>
                <div class="gc c-rname ps-1">Apollo Liftoff</div>
                <div class="gc c-task gc-plain"></div>
              </div>
              <div class="grid-row">
                <div class="gc c-chk"><i class="box-chk"></i></div>
                <div class="gc c-blank"></div>
                <div class="gc c-exp"><span class="exp-btn"><i class="tri-d"></i></span></div>
                <div class="gc c-tool"><svg width="14" height="17"><use href="#i-tools"/></svg></div>
                <div class="gc c-note"><svg width="17" height="20"><use href="#i-pad-on"/></svg></div>
                <div class="gc c-sname ps-2"><a class="who" href="#">Hepburn, Audrey</a></div>
                <div class="gc c-task gc-plain">Apollo-Bookkeeping</div>
              </div>
              <div class="grid-row end">
                <div class="gc c-chk"><i class="box-chk"></i></div>
                <div class="gc c-blank"></div>
                <div class="gc c-exp"><span class="exp-btn"><i class="tri-d"></i></span></div>
                <div class="gc c-tool"><svg width="14" height="17"><use href="#i-tools"/></svg></div>
                <div class="gc c-note"><svg width="17" height="14"><use href="#i-pad-row"/></svg></div>
                <div class="gc c-sname ps-2"><a class="who" href="#">Hepburn, Audrey</a></div>
                <div class="gc c-task gc-plain"></div>
              </div>
            </div>
            <div class="side-part">
              <div class="side-top"><i class="tri-r"></i></div>
              <div class="side-head"><span class="side-clip">03/10</span><i class="tri-r"></i></div>
              <div class="side-nums"><span>0.00</span><b>4</b></div>
              <div class="side-inp"></div>
              <div class="side-inp"></div>
            </div>
          </div>
        </div>
      </div>
      <div class="dim"></div>
      <div class="note-modal">
        <div class="note-title">Notes</div>
        <svg class="note-x" width="14" height="14"><use href="#i-x"/></svg>
        <div class="edit-box">
          <div class="edit-tools">
            <div class="eg eg-hist"><svg width="17" height="18"><use href="#i-undo"/></svg><svg width="17" height="18"><use href="#i-rdo"/></svg></div>
            <div class="eg eg-para">Paragraph<svg width="12" height="7"><use href="#i-cdown"/></svg></div>
            <div class="eg eg-font ps-1">
              <span class="etb etb-b">B</span>
              <span class="etb etb-i">I</span>
              <span class="etb etb-u">U</span>
              <span class="etb etb-s">S</span>
              <span class="etb etb-hl"><svg width="18" height="18"><use href="#i-hl"/></svg></span>
              <span class="etb etb-c"><svg width="11" height="7"><use href="#i-cdown"/></svg></span>
              <span class="etb etb-a">A<i></i></span>
              <span class="etb etb-c"><svg width="11" height="7"><use href="#i-cdown"/></svg></span>
            </div>
            <div class="eg eg-align">
              <svg width="16" height="14"><use href="#i-al"/></svg>
              <svg width="16" height="14"><use href="#i-ac"/></svg>
              <svg width="16" height="14"><use href="#i-ar"/></svg>
              <svg width="16" height="14"><use href="#i-aj"/></svg>
            </div>
            <div class="eg eg-more fw-bold">&bull;&bull;&bull;</div>
          </div>
          <div class="edit-ph">Add your note here</div>
          <div class="edit-foot">
            <span class="foot-type">Alert</span>
            <svg width="10" height="6" viewBox="0 0 14 8"><path d="M1 1l6 6 6-6" fill="none" stroke="#333" stroke-width="2.500"/></svg>
            <span class="foot-bar"></span>
            <svg width="20" height="20" class="me-4"><use href="#i-wand"/></svg>
            <svg width="19" height="16"><use href="#i-send"/></svg>
          </div>
        </div>
        <div class="no-notes">No notes to show</div>
      </div>
    </div>
  </section>

</div>

<!-- red pointer from the row's note icon to the new panel -->
<svg class="pointer" width="290" height="175" viewBox="1470 180 290 175">
  <rect x="1480" y="309" width="41" height="40" rx="3" fill="none" stroke="#f00" stroke-width="4"/>
  <path d="M1522 325L1738 196" stroke="#f00" stroke-width="4"/>
  <path d="M1752 187L1732 189L1739 203z" fill="#f00"/>
</svg>

<script src="https://cdn.jsdelivr.net/npm/bootstrap@5.3.0/dist/js/bootstrap.bundle.min.js"></script>
</body>
</html>
